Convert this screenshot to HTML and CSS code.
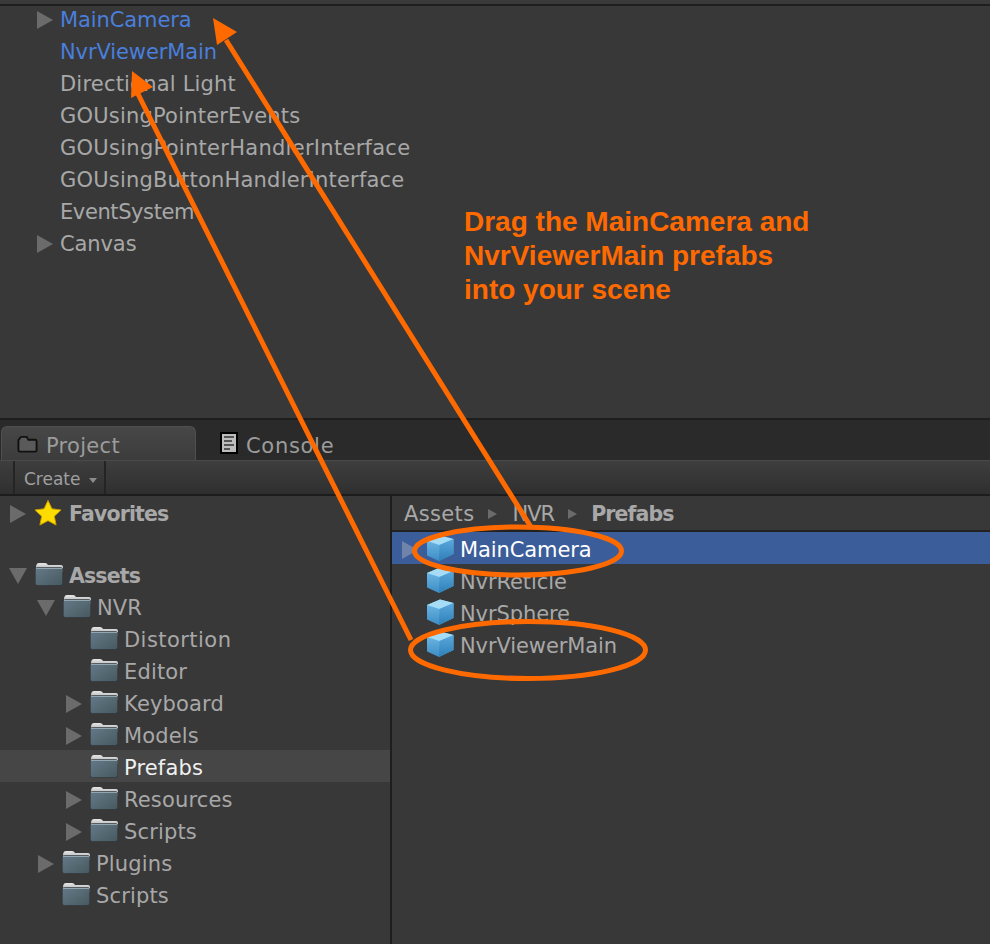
FILE: index.html
```html
<!DOCTYPE html>
<html lang="en">
<head>
<meta charset="utf-8">
<title>Unity project</title>
<link rel="stylesheet" href="styles.css">
</head>
<body>
<svg class="defs" width="0" height="0">
  <defs>
    <linearGradient id="fg" x1="0" y1="0" x2="1" y2="1"><stop offset="0" stop-color="#64798a"/><stop offset="0.5" stop-color="#566a74"/><stop offset="1" stop-color="#47585f"/></linearGradient>
    <linearGradient id="ft" x1="0" y1="0" x2="0" y2="1"><stop offset="0" stop-color="#e6e6e6"/><stop offset="1" stop-color="#a5a5a5"/></linearGradient>
    <linearGradient id="cl" x1="0" y1="0" x2="0" y2="1"><stop offset="0" stop-color="#74c0ec"/><stop offset="1" stop-color="#3d8cc4"/></linearGradient>
    <linearGradient id="cr" x1="0" y1="0" x2="0" y2="1"><stop offset="0" stop-color="#5aa8dc"/><stop offset="1" stop-color="#2f7fb8"/></linearGradient>
    <symbol id="folder" viewBox="0 0 28 24">
      <path d="M1 5.500Q1 1 4 1H10Q12 1 13 3H26Q28 3 28 5V10H1Z" fill="url(#ft)"/>
      <rect x="0.300" y="5.500" width="27.400" height="18" rx="2" fill="url(#fg)" stroke="#2b3338" stroke-width="0.600"/>
      <path d="M1 6.500H27" stroke="#93a5ae" stroke-width="1"/>
    </symbol>
    <symbol id="cube" viewBox="0 0 28 26">
      <path d="M14 0.500L27.500 4V19L13 26L1 20.500V6Z" fill="url(#cl)"/>
      <path d="M1 6L14 0.500L27.500 4L13.500 10Z" fill="#a6dcf6"/>
      <path d="M13.500 10L27.500 4V19L13 26Z" fill="url(#cr)"/>
    </symbol>
  </defs>
</svg>

<div class="app">
  <div class="topstrip"></div>

  <section class="hierarchy">
    <div class="row"><span class="tri tri-r"></span><span class="blue">MainCamera</span></div>
    <div class="row"><span class="tri-none"></span><span class="blue">NvrViewerMain</span></div>
    <div class="row wide"><span class="tri-none"></span><span>Directional Light</span></div>
    <div class="row wide"><span class="tri-none"></span><span>GOUsingPointerEvents</span></div>
    <div class="row wider-row"><span class="tri-none"></span><span>GOUsingPointerHandlerInterface</span></div>
    <div class="row wide"><span class="tri-none"></span><span>GOUsingButtonHandlerInterface</span></div>
    <div class="row tight"><span class="tri-none"></span><span>EventSystem</span></div>
    <div class="row"><span class="tri tri-r"></span><span>Canvas</span></div>
  </section>

  <nav class="tabs">
    <div class="tab tab-active">
      <svg class="tabicon" width="21" height="18" viewBox="0 0 22 18"><path d="M1.500 5V15.500Q1.500 17 3 17H19Q20.500 17 20.500 15.500V6Q20.500 4.500 19 4.500H12L10 1.500H5Q3.500 1.500 3 3Z" fill="#5a5a5a" stroke="#111" stroke-width="2"/></svg>
      <span class="tablabel">Project</span>
    </div>
    <div class="tab">
      <svg class="tabicon" width="18" height="22" viewBox="0 0 18 22"><rect width="18" height="22" fill="#000"/><rect x="2" y="2" width="14" height="18" fill="#bdbdbd"/><path d="M4 5H14M4 9H12M4 13H14M4 17H10" stroke="#555" stroke-width="2"/></svg>
      <span class="tablabel">Console</span>
    </div>
  </nav>

  <div class="toolbar">
    <div class="create"><span class="create-label">Create</span><span class="caret"></span></div>
  </div>

  <div class="browser">
    <aside class="tree">
      <div class="node l0 bold"><span class="tri tri-r"></span>
        <svg class="star" width="28" height="27" viewBox="0 0 30 28"><path d="M15 1L19.200 10L29 11.300L21.800 18L23.700 27.500L15 22.800L6.300 27.500L8.200 18L1 11.300L10.800 10Z" fill="#ffdc00" stroke="#c89a00" stroke-width="1"/></svg>
        <span>Favorites</span></div>
      <div class="node spacer"></div>
      <div class="node l0 bold"><span class="tri tri-d"></span><svg class="ficon"><use href="#folder"/></svg><span>Assets</span></div>
      <div class="node l1"><span class="tri tri-d"></span><svg class="ficon"><use href="#folder"/></svg><span>NVR</span></div>
      <div class="node l2"><span class="tri-none"></span><svg class="ficon"><use href="#folder"/></svg><span class="wider">Distortion</span></div>
      <div class="node l2"><span class="tri-none"></span><svg class="ficon"><use href="#folder"/></svg><span>Editor</span></div>
      <div class="node l2"><span class="tri tri-r"></span><svg class="ficon"><use href="#folder"/></svg><span>Keyboard</span></div>
      <div class="node l2"><span class="tri tri-r"></span><svg class="ficon"><use href="#folder"/></svg><span>Models</span></div>
      <div class="node l2 picked"><span class="tri-none"></span><svg class="ficon"><use href="#folder"/></svg><span>Prefabs</span></div>
      <div class="node l2"><span class="tri tri-r"></span><svg class="ficon"><use href="#folder"/></svg><span>Resources</span></div>
      <div class="node l2"><span class="tri tri-r"></span><svg class="ficon"><use href="#folder"/></svg><span>Scripts</span></div>
      <div class="node l1"><span class="tri tri-r"></span><svg class="ficon"><use href="#folder"/></svg><span>Plugins</span></div>
      <div class="node l1"><span class="tri-none"></span><svg class="ficon"><use href="#folder"/></svg><span>Scripts</span></div>
    </aside>
    <main class="files">
      <div class="crumbs"><span class="c-assets">Assets</span><span class="sep"></span><span class="c-nvr">NVR</span><span class="sep"></span><b>Prefabs</b></div>
      <div class="file file-sel"><span class="tri tri-r tri-sel"></span><svg class="cube"><use href="#cube"/></svg><span>MainCamera</span></div>
      <div class="file"><span class="tri-none"></span><svg class="cube"><use href="#cube"/></svg><span>NvrReticle</span></div>
      <div class="file"><span class="tri-none"></span><svg class="cube"><use href="#cube"/></svg><span>NvrSphere</span></div>
      <div class="file"><span class="tri-none"></span><svg class="cube"><use href="#cube"/></svg><span>NvrViewerMain</span></div>
    </main>
  </div>
</div>

<svg class="annot" width="990" height="944" viewBox="0 0 990 944">
  <g fill="none" stroke="#ff6a00">
    <path d="M531 527L226 40" stroke-width="5"/>
    <path d="M411 640L137 92" stroke-width="5"/>
    <ellipse cx="518" cy="551" rx="103.500" ry="24" stroke-width="5"/>
    <ellipse cx="528" cy="650" rx="117.500" ry="28.500" stroke-width="5"/>
  </g>
  <path d="M213 18L237 32L217 45Z" fill="#ff6a00"/>
  <path d="M132 71L153 87L131 98Z" fill="#ff6a00"/>
</svg>
<p class="note">Drag the MainCamera and<br>NvrViewerMain prefabs<br>into your scene</p>
</body>
</html>
```

FILE: styles.css
```css
* { box-sizing: border-box; }
html, body { margin: 0; padding: 0; background: #383838; }
body { width: 990px; height: 944px; overflow: hidden; position: relative;
  font-family: "DejaVu Sans", sans-serif; font-size: 21px; color: #a8a8a8; }
.defs { position: absolute; }
.app { display: flex; flex-direction: column; height: 944px; }
.topstrip { height: 6px; background: #3a3a3a; border-bottom: 2px solid #1f1f1f; flex: none; }
.hierarchy { height: 412px; flex: none; background: #383838; }
.row { height: 32px; display: flex; align-items: center; padding-left: 37px; padding-bottom: 4px; letter-spacing: -0.1px; }
.wide { letter-spacing: 0.2px; }
.wider-row { letter-spacing: 0.28px; }
.wider { letter-spacing: 0.45px; }
.tight { letter-spacing: -0.4px; }
.blue { color: #4a7fdc; }
.tri { display: inline-block; flex: none; width: 0; height: 0; }
.tri-none { display: inline-block; flex: none; width: 16px; }
.tri-r { border-left: 16px solid #6b6b6b; border-top: 9px solid transparent; border-bottom: 9px solid transparent; }
.tri-d { width: 0; border-top: 16px solid #6b6b6b; border-left: 9px solid transparent; border-right: 9px solid transparent; margin-left: -1px; margin-right: -1px; }
.row > .tri, .row > .tri-none { margin-right: 7px; }

.tabs { height: 42px; flex: none; display: flex; align-items: flex-end; background: #2a2a2a; border-top: 2px solid #1e1e1e; padding-left: 1px; }
.tab { height: 34px; display: flex; align-items: center; gap: 8px; padding: 0 0 0 15px; width: 195px; color: #9c9c9c; }
.tablabel { margin-top: 4px; letter-spacing: 0.3px; }
.tab-active { background: linear-gradient(#474747, #3c3c3c); border-radius: 6px 6px 0 0; border: 1px solid #4f4f4f; border-bottom: 0; }
.tab:not(.tab-active) { padding-left: 24px; }
.tab:not(.tab-active) .tablabel { letter-spacing: 0.7px; margin-top: 5px; }
.tabicon { flex: none; }
.toolbar { height: 36px; flex: none; display: flex; padding-left: 13px; background: linear-gradient(#3e3e3e, #2f2f2f); border-top: 1px solid #4a4a4a; border-bottom: 2px solid #1c1c1c; }
.create { display: flex; align-items: center; gap: 8px; width: 93px; padding-left: 9px; font-size: 17px; border-left: 2px solid #242424; border-right: 2px solid #242424; color: #a0a0a0; }
.create-label { margin-top: 3px; }
.caret { width: 0; height: 0; border-top: 5px solid #8c8c8c; border-left: 4px solid transparent; border-right: 4px solid transparent; margin-top: 5px; }

.browser { flex: 1; display: flex; min-height: 0; }
.tree { width: 392px; flex: none; border-right: 2px solid #1e1e1e; letter-spacing: 0.15px; }
.node { height: 32px; display: flex; align-items: center; padding-top: 4px; }
.spacer { height: 30px; }
.node .tri-none { width: 16px; }
.node .tri, .node .tri-none { margin-right: 8px; }
.l0 { padding-left: 10px; }
.l1 { padding-left: 38px; }
.l2 { padding-left: 66px; }
.node > span:last-child { margin-left: 6px; }
.bold { font-weight: 700; font-size: 20.500px; }
.bold > span:last-child { letter-spacing: -0.85px; margin-left: 6px; }
.star { flex: none; margin-top: -4px; margin-right: 1px; }
.ficon { width: 28px; height: 24px; flex: none; margin-top: -4px; }
.picked { background: #464646; color: #f0f0f0; }
.files { flex: 1; min-width: 0; }
.crumbs { height: 36px; display: flex; align-items: center; padding-left: 12px; padding-top: 1px; gap: 14px; border-bottom: 2px solid #222; }
.c-assets { letter-spacing: 0.35px; }
.c-nvr { letter-spacing: -1px; margin-left: 1px; }
.crumbs b { color: #a8a8a8; font-size: 20.500px; letter-spacing: -0.9px; }
.sep { width: 0; height: 0; border-left: 9px solid #6b6b6b; border-top: 5px solid transparent; border-bottom: 5px solid transparent; }
.file { height: 32px; display: flex; align-items: center; padding-left: 10px; padding-top: 3px; letter-spacing: -0.1px; }
.file .tri, .file .tri-none { margin-right: 8px; }
.file .cube { width: 28px; height: 26px; flex: none; margin-right: 6px; margin-top: -4px; }
.file .tri-none { width: 16px; }
.file-sel { background: #3b5d9a; color: #ffffff; }
.tri-sel { border-left-color: #6f83ab; }

.annot { position: absolute; left: 0; top: 0; pointer-events: none; }
.note { position: absolute; left: 464px; top: 205px; margin: 0; font: 700 28px/34px "Liberation Sans", sans-serif; color: #ff6a00; }
```
